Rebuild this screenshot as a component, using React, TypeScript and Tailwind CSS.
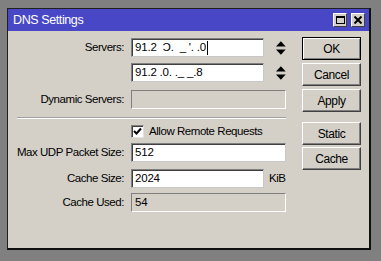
import React from "react";

const font = { fontFamily: '"Liberation Sans", Arial, sans-serif' };

function Label({ children }: { children: React.ReactNode }) {
  return (
    <div className="w-[116px] shrink-0 text-right leading-none whitespace-nowrap">{children}</div>
  );
}

function Input({ value, w, caret }: { value: string; w: string; caret?: boolean }) {
  return (
    <div
      className={`${w} h-[19px] bg-white border border-t-[#808080] border-l-[#808080] border-b-[#c8c8c8] border-r-[#c8c8c8] shadow-[inset_1px_1px_0_#404040] flex items-center pl-[3px] leading-none whitespace-pre tracking-[-0.2px]`}
    >
      {value}
      {caret && <span className="inline-block w-px h-[14px] bg-black ml-px" />}
    </div>
  );
}

function Disabled({ value, w }: { value?: string; w: string }) {
  return (
    <div
      className={`${w} h-[19px] bg-[#d4d0c8] border border-t-[#808080] border-l-[#808080] border-b-white border-r-white flex items-center pl-[3px] leading-none tracking-[-0.2px]`}
    >
      {value}
    </div>
  );
}

function Arrows() {
  return (
    <svg width="10" height="14" viewBox="0 0 10 14" className="ml-[5px]">
      <polygon points="5,0 10,5.5 0,5.5" fill="#000" />
      <polygon points="0,8.5 10,8.5 5,14" fill="#000" />
    </svg>
  );
}

function Btn({ children, def, mt }: { children: React.ReactNode; def?: boolean; mt: string }) {
  return (
    <div
      className={`${mt} w-[59px] h-[23px] flex items-center justify-center leading-none text-[12px] tracking-[-0.4px] ${
        def
          ? "border border-black shadow-[inset_1px_1px_0_#fff,inset_-1px_-1px_0_#808080]"
          : "border border-t-white border-l-white border-b-[#404040] border-r-[#404040] shadow-[inset_-1px_-1px_0_#808080]"
      }`}
    >
      {children}
    </div>
  );
}

export default function App() {
  return (
    <div className="w-[381px] h-[261px] bg-[#808080] pt-[8px] pl-[7px]" style={font}>
      <div className="w-[364px] h-[242px] bg-[#d4d0c8] border-l border-t border-l-[#202020] border-t-[#202020] border-r-2 border-b-2 border-r-[#101010] border-b-[#101010] flex flex-col text-[11.5px] tracking-[-0.45px] text-black">
        {/* title bar */}
        <div className="h-[22px] bg-[#4848c6] flex items-center pl-[5px] pr-[4px] shrink-0">
          <div className="text-white text-[12.5px] tracking-[-0.4px] leading-none flex-1">DNS Settings</div>
          <div className="w-[14px] h-[14px] bg-[#d4d0c8] border border-t-white border-l-white border-b-[#404040] border-r-[#404040] flex items-center justify-center">
            <div className="w-[9px] h-[8px] border border-black border-t-2" />
          </div>
          <div className="ml-[4px] w-[14px] h-[14px] bg-[#d4d0c8] border border-t-white border-l-white border-b-[#404040] border-r-[#404040] flex items-center justify-center">
            <svg width="8" height="8" viewBox="0 0 8 8">
              <path d="M0.5 0.5 L7.5 7.5 M7.5 0.5 L0.5 7.5" stroke="#000" strokeWidth="2" />
            </svg>
          </div>
        </div>
        {/* body */}
        <div className="flex">
          <div className="flex flex-col w-[278px]">
            <div className="flex items-center gap-[7px] mt-[7px]">
              <Label>Servers:</Label>
              <Input w="w-[137px]" value="91.2  Ɔ.  _ '. .0" caret />
              <Arrows />
            </div>
            <div className="flex items-center gap-[7px] mt-[6px]">
              <Label>{""}</Label>
              <Input w="w-[137px]" value="91.2 .0. ._ _.8" />
              <Arrows />
            </div>
            <div className="flex items-center gap-[7px] mt-[8px]">
              <Label>Dynamic Servers:</Label>
              <Disabled w="w-[155px]" />
            </div>
            <div className="ml-[9px] w-[269px] mt-[8px] h-[2px] border-t border-t-[#a0a0a0] border-b border-b-white" />
            <div className="flex items-center gap-[7px] mt-[6px]">
              <Label>{""}</Label>
              <div className="flex items-center gap-[5px]">
                <div className="w-[13px] h-[13px] bg-white border border-t-[#808080] border-l-[#808080] border-b-[#e0e0e0] border-r-[#e0e0e0] shadow-[inset_1px_1px_0_#404040] flex items-center justify-center">
                  <svg width="9" height="9" viewBox="0 0 9 9">
                    <path d="M1 4 L3.5 6.5 L8 1.5" stroke="#000" strokeWidth="2" fill="none" />
                  </svg>
                </div>
                <span className="leading-none whitespace-nowrap">Allow Remote Requests</span>
              </div>
            </div>
            <div className="flex items-center gap-[7px] mt-[5px]">
              <Label>Max UDP Packet Size:</Label>
              <Input w="w-[155px]" value="512" />
            </div>
            <div className="flex items-center gap-[7px] mt-[7px]">
              <Label>Cache Size:</Label>
              <Input w="w-[133px]" value="2024" />
              <span className="ml-[-2px] leading-none">KiB</span>
            </div>
            <div className="flex items-center gap-[7px] mt-[5px]">
              <Label>Cache Used:</Label>
              <Disabled w="w-[155px]" value="54" />
            </div>
          </div>
          <div className="flex flex-col ml-[16px]">
            <Btn mt="mt-[6px]" def>OK</Btn>
            <Btn mt="mt-[3px]">Cancel</Btn>
            <Btn mt="mt-[3px]">Apply</Btn>
            <Btn mt="mt-[10px]">Static</Btn>
            <Btn mt="mt-[2px]">Cache</Btn>
          </div>
        </div>
      </div>
    </div>
  );
}
